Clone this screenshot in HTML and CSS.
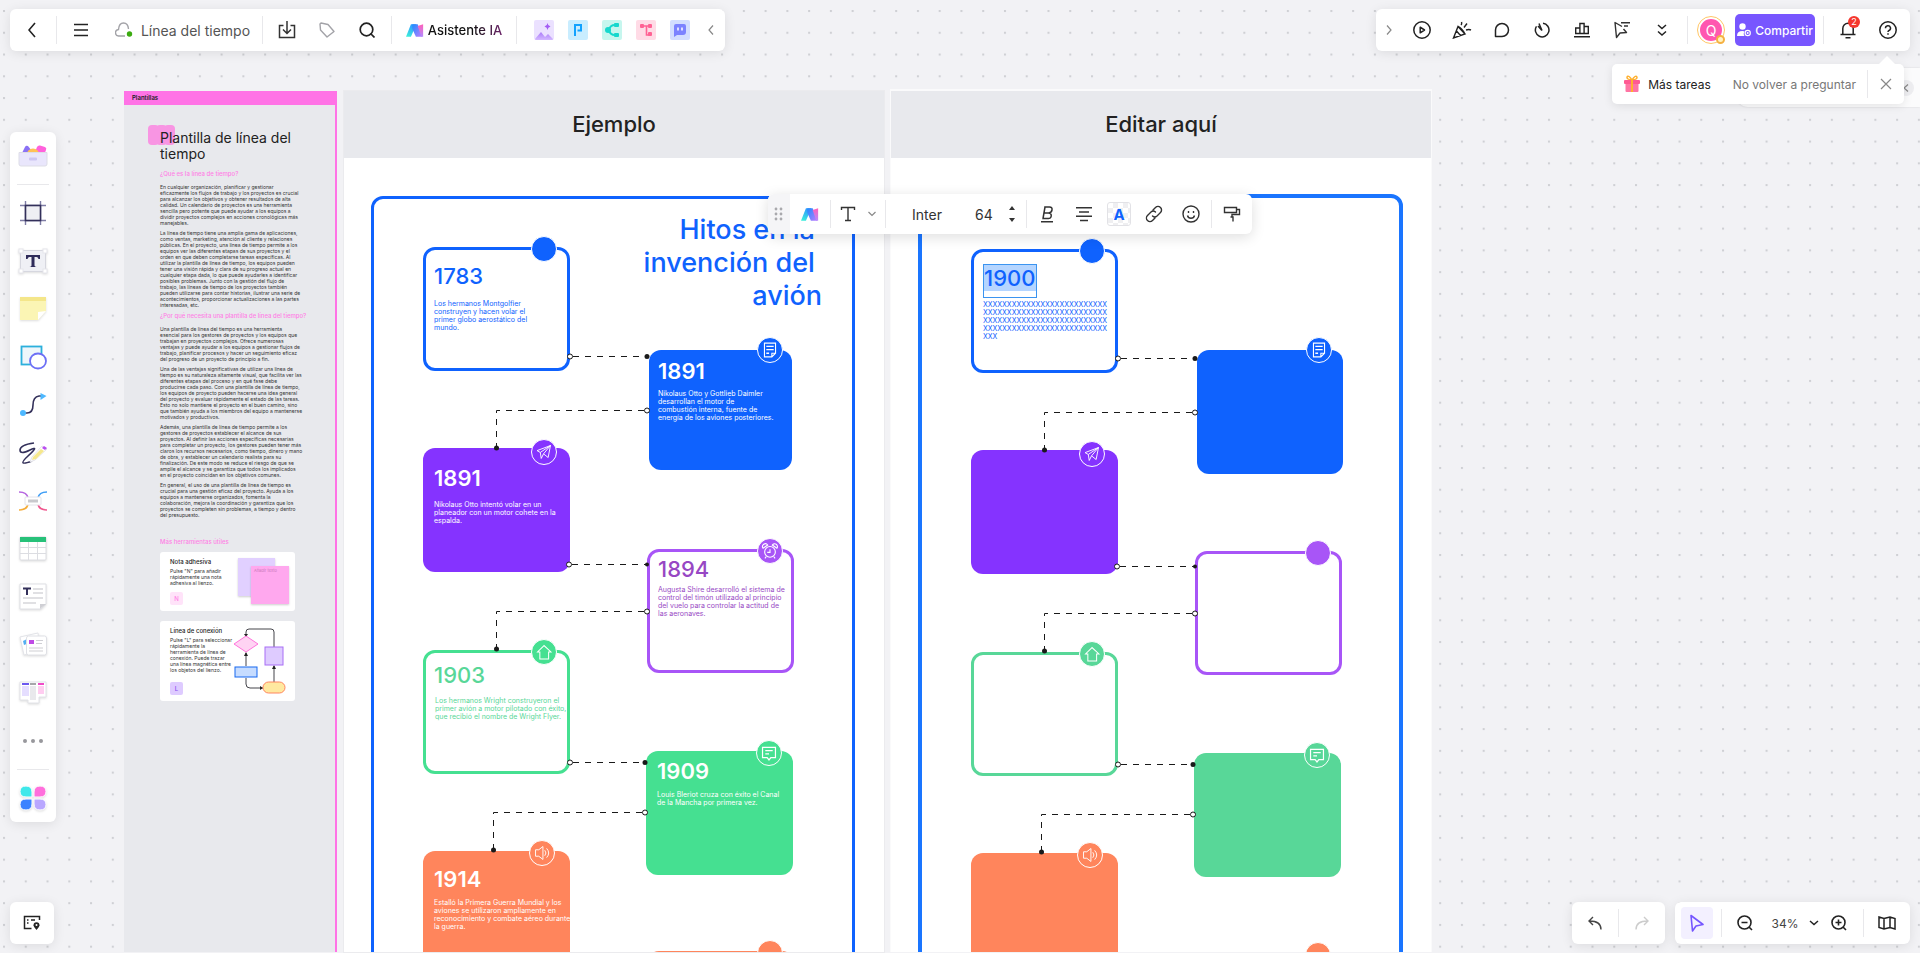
FILE: index.html
```html
<!DOCTYPE html>
<html lang="es">
<head>
<meta charset="utf-8">
<title>Línea del tiempo</title>
<link rel="stylesheet" href="styles.css">
</head>
<body>
<svg class="defs" aria-hidden="true">
  <defs>
    <linearGradient id="gA" x1="0" y1="1" x2="0.4" y2="0"><stop offset="0" stop-color="#3df5d8"/><stop offset="1" stop-color="#2f9bff"/></linearGradient>
    <linearGradient id="gB" x1="0" y1="0" x2="1" y2="1"><stop offset="0" stop-color="#1b8cff"/><stop offset="1" stop-color="#c07bff"/></linearGradient>
    <linearGradient id="gC" x1="0" y1="1" x2="0" y2="0"><stop offset="0" stop-color="#b48cff"/><stop offset="1" stop-color="#ff5fb8"/></linearGradient>
    <linearGradient id="gMount" x1="0" y1="0" x2="0" y2="1"><stop offset="0" stop-color="#ab7bfa"/><stop offset="1" stop-color="#d3b8ff"/></linearGradient>
    <symbol id="ai" viewBox="0 0 20 16">
      <path d="M5.500 1h6L5.500 15H0z" fill="url(#gA)"/>
      <path d="M7 1h6l5 14h-7L7 6z" fill="url(#gB)"/>
      <path d="M13 3l6-2v14h-2z" fill="url(#gC)"/>
    </symbol>
    <symbol id="plane" viewBox="0 0 26 26"><path d="M20 6L5.500 11.500l3.500 2L20 6l-2.500 13-5-4M9 13.500l1 6.500 2.500-5M20 6l-7.500 9" fill="none" stroke="#fff" stroke-linejoin="round"/></symbol>
    <symbol id="note" viewBox="0 0 26 26"><path d="M7 5.500h12v11l-4 4H7zM19 16.500h-4v4" fill="none" stroke="#fff" stroke-width="1.200"/><path d="M9 9h8M9 12.500h8M9 16.500h3" stroke="#fff" stroke-width="1.400"/></symbol>
    <symbol id="clock" viewBox="0 0 26 26"><circle cx="13" cy="14" r="5.800" fill="none" stroke="#fff" stroke-width="1.200"/><path d="M13 11v3.500h-3M5.500 10a3 3 0 0 1 5-3.500zM20.500 10a3 3 0 0 0-5-3.500zM9 19l-1.500 2M17 19l1.500 2" fill="none" stroke="#fff" stroke-width="1.200"/></symbol>
    <symbol id="house" viewBox="0 0 26 26"><path d="M13 6l-7 7h2.500v7.500h9.500V13h2.500z" fill="none" stroke="#fff" stroke-width="1.100"/></symbol>
    <symbol id="speech" viewBox="0 0 26 26"><path d="M6 7h14v11h-5l-2 2.500-2-2.500H6z" fill="none" stroke="#fff" stroke-width="1.300"/><path d="M9 10.500h8M9 14h4" stroke="#fff" stroke-width="1.300"/></symbol>
    <symbol id="sound" viewBox="0 0 26 26"><path d="M6 9.500h3.500L14 6v14l-4.500-3.500H6zM16 10q2.500 3 0 6M18 8q4.500 5 0 10" fill="none" stroke="#fff" stroke-linejoin="round"/></symbol>
    <symbol id="links" viewBox="0 0 540 862">
      <g fill="none" stroke="#1a1a1a" stroke-dasharray="6 6">
        <path d="M229 265.500h74"/><path d="M300 319.500H152.500V357"/><path d="M228 473.500h74"/><path d="M300 520.500H152.500V558"/><path d="M229 671.500h72"/><path d="M298 721.500H149.500V759"/>
      </g>
      <g fill="#fff" stroke="#1a1a1a"><circle cx="226" cy="265.500" r="2.500"/><circle cx="303" cy="319.500" r="2.500"/><circle cx="225" cy="473.500" r="2.500"/><circle cx="303" cy="520.500" r="2.500"/><circle cx="226" cy="671.500" r="2.500"/><circle cx="301" cy="721.500" r="2.500"/></g>
      <g fill="#1a1a1a"><circle cx="303" cy="265.500" r="2.500"/><circle cx="152.500" cy="357" r="2.500"/><circle cx="303" cy="473.500" r="2"/><circle cx="152.500" cy="558" r="2.500"/><circle cx="301" cy="671.500" r="2.500"/><circle cx="149.500" cy="759" r="2.500"/></g>
    </symbol>
    <pattern id="dots" width="64" height="64" patternUnits="userSpaceOnUse" patternTransform="translate(3 10) scale(.34)"><rect width="6" height="6" fill="#cfd0d4"/></pattern>
  </defs>
</svg>

<main class="board">
  <svg class="grid" aria-hidden="true"><rect width="100%" height="100%" fill="url(#dots)"/></svg>

  <section class="guide">
    <div class="guide-tab">Plantillas</div>
    <div class="guide-body">
      <span class="marks"><i></i><i></i><i></i></span>
      <h1>Plantilla de línea del<br>tiempo</h1>
      <h2>¿Qué es la línea de tiempo?</h2>
      <p>En cualquier organización, planificar y gestionar<br>eficazmente los flujos de trabajo y los proyectos es crucial<br>para alcanzar los objetivos y obtener resultados de alta<br>calidad. Un calendario de proyectos es una herramienta<br>sencilla pero potente que puede ayudar a los equipos a<br>dividir proyectos complejos en acciones cronológicas más<br>manejables.</p>
      <p>La línea de tiempo tiene una amplia gama de aplicaciones,<br>como ventas, marketing, atención al cliente y relaciones<br>públicas. En el proyecto, una línea de tiempo permite a los<br>equipos ver las diferentes etapas de sus proyectos y el<br>orden en que deben completarse tareas específicas. Al<br>utilizar la plantilla de línea de tiempo, los equipos pueden<br>tener una visión rápida y clara de su progreso actual en<br>cualquier etapa dada, lo que puede ayudarles a identificar<br>posibles problemas. Junto con la gestión del flujo de<br>trabajo, las líneas de tiempo de los proyectos también<br>pueden utilizarse para contar historias, ilustrar una serie de<br>acontecimientos, proporcionar actualizaciones a las partes<br>interesadas, etc.</p>
      <h2 class="second">¿Por qué necesita una plantilla de línea del tiempo?</h2>
      <p>Una plantilla de línea del tiempo es una herramienta<br>esencial para los gestores de proyectos y los equipos que<br>trabajan en proyectos complejos. Ofrece numerosas<br>ventajas y puede ayudar a los equipos a gestionar flujos de<br>trabajo, planificar procesos y hacer un seguimiento eficaz<br>del progreso de un proyecto de principio a fin.</p>
      <p>Una de las ventajas significativas de utilizar una línea de<br>tiempo es su naturaleza altamente visual, que facilita ver las<br>diferentes etapas del proceso y en qué fase debe<br>producirse cada paso. Con una plantilla de línea de tiempo,<br>los equipos de proyecto pueden hacerse una idea general<br>del proyecto y evaluar rápidamente el estado de las tareas.<br>Esto no solo mantiene el proyecto en el buen camino, sino<br>que también ayuda a los miembros del equipo a mantenerse<br>motivados y productivos.</p>
      <p>Además, una plantilla de línea de tiempo permite a los<br>gestores de proyectos establecer el alcance de sus<br>proyectos. Al definir las acciones específicas necesarias<br>para completar un proyecto, los gestores pueden tener más<br>claros los recursos necesarios, como tiempo, dinero y mano<br>de obra, y establecer un calendario realista para su<br>finalización. De este modo se reduce el riesgo de que se<br>amplíe el alcance y se garantiza que todos los implicados<br>en el proyecto coincidan en los objetivos comunes.</p>
      <p>En general, el uso de una plantilla de línea de tiempo es<br>crucial para una gestión eficaz del proyecto. Ayuda a los<br>equipos a mantenerse organizados, fomenta la<br>colaboración, mejora la coordinación y garantiza que los<br>proyectos se completen sin problemas, a tiempo y dentro<br>del presupuesto.</p>
      <h2 class="tools-title">Más herramientas útiles</h2>
      <article class="tip">
        <div class="tip-text">
          <h3>Nota adhesiva</h3>
          <p>Pulse "N" para añadir<br>rápidamente una nota<br>adhesiva al lienzo.</p>
          <kbd class="key-pink">N</kbd>
        </div>
        <div class="stickies"><span class="lilac"></span><span class="rose">Añadir texto</span></div>
      </article>
      <article class="tip tall">
        <div class="tip-text">
          <h3>Línea de conexión</h3>
          <p>Pulse "L" para seleccionar<br>rápidamente la<br>herramienta de línea de<br>conexión. Puede trazar<br>una línea magnética entre<br>los objetos del lienzo.</p>
          <kbd>L</kbd>
        </div>
        <svg class="flow" width="54" height="68" viewBox="0 0 54 68" fill="none">
          <path d="M13 10V5q0-3 3-3h22q3 0 3 3v16M13 39V26M41 56V39M13 51v6q0 4 4 4h13" stroke="#45454b"/>
          <path d="M13 10l-2-3h4zM13 25l-2 4h4zM41 38l-2 4h4zM30 61l-3-2v4z" fill="#222"/>
          <path d="M13 9l12 8-12 8-12-8z" fill="#ffd3f3" stroke="#ff73dc"/>
          <rect x="32" y="20" width="18" height="18" fill="#decbff" stroke="#a86ff5"/>
          <rect x="2" y="40" width="22" height="10" fill="#c6dcff" stroke="#1668f0"/>
          <rect x="30" y="55" width="22" height="11" rx="5.500" fill="#ffe9a0" stroke="#ff8560"/>
        </svg>
      </article>
    </div>
  </section>

  <section class="frame">
    <h2 class="frame-title">Ejemplo</h2>
    <div class="outline"></div>
    <div class="diagram">
      <p class="headline">Hitos en la 
invención del 
avión</p>
      <article class="card left c1 line blue"><h3>1783</h3><p>Los hermanos Montgolfier<br>construyen y hacen volar el<br>primer globo aerostático del<br>mundo.</p><span class="badge"></span></article>
      <article class="card right c2 fill blue"><h3>1891</h3><p>Nikolaus Otto y Gottlieb Daimler<br>desarrollan el motor de<br>combustión interna, fuente de<br>energía de los aviones posteriores.</p><span class="badge"><svg><use href="#note"/></svg></span></article>
      <article class="card left c3 fill purple"><h3>1891</h3><p>Nikolaus Otto intentó volar en un<br>planeador con un motor cohete en la<br>espalda.</p><span class="badge"><svg><use href="#plane"/></svg></span></article>
      <article class="card right c4 line violet"><h3>1894</h3><p>Augusta Shire desarrolló el sistema de<br>control del timón utilizado al principio<br>del vuelo para controlar la actitud de<br>las aeronaves.</p><span class="badge"><svg><use href="#clock"/></svg></span></article>
      <article class="card left c5 line green"><h3>1903</h3><p>Los hermanos Wright construyeron el<br>primer avión a motor pilotado con éxito,<br>que recibió el nombre de Wright Flyer.</p><span class="badge"><svg><use href="#house"/></svg></span></article>
      <article class="card right c6 fill green"><h3>1909</h3><p>Louis Bleriot cruza con éxito el Canal<br>de la Mancha por primera vez.</p><span class="badge"><svg><use href="#speech"/></svg></span></article>
      <article class="card left c7 fill orange"><h3>1914</h3><p>Estalló la Primera Guerra Mundial y los<br>aviones se utilizaron ampliamente en<br>reconocimiento y combate aéreo durante<br>la guerra.</p><span class="badge"><svg><use href="#sound"/></svg></span></article>
      <article class="card right c8 line orange"><span class="badge"></span></article>
      <svg class="links" width="540" height="862"><use href="#links"/></svg>
    </div>
  </section>

  <section class="frame edit">
    <h2 class="frame-title">Editar aquí</h2>
    <div class="outline"></div>
    <div class="diagram">
      <article class="card left c1 line blue"><h3 class="selected"><span>1900</span></h3><p>XXXXXXXXXXXXXXXXXXXXXXXXXX<br>XXXXXXXXXXXXXXXXXXXXXXXXXX<br>XXXXXXXXXXXXXXXXXXXXXXXXXX<br>XXXXXXXXXXXXXXXXXXXXXXXXXX<br>XXX</p><span class="badge"></span></article>
      <article class="card right c2 fill blue"><span class="badge"><svg><use href="#note"/></svg></span></article>
      <article class="card left c3 fill purple"><span class="badge"><svg><use href="#plane"/></svg></span></article>
      <article class="card right c4 line violet"><span class="badge"></span></article>
      <article class="card left c5 line mint"><span class="badge"><svg><use href="#house"/></svg></span></article>
      <article class="card right c6 fill mint"><span class="badge"><svg><use href="#speech"/></svg></span></article>
      <article class="card left c7 fill orange"><span class="badge"><svg><use href="#sound"/></svg></span></article>
      <article class="card right c8"><span class="badge orange"></span></article>
      <svg class="links" width="540" height="862"><use href="#links"/></svg>
    </div>
  </section>

  <div class="format-bar" role="toolbar" aria-label="Formato de texto">
    <span class="grip"><svg width="10" height="14" viewBox="0 0 10 14" fill="#a9a9ad"><circle cx="2" cy="2" r="1.400"/><circle cx="7" cy="2" r="1.400"/><circle cx="2" cy="7" r="1.400"/><circle cx="7" cy="7" r="1.400"/><circle cx="2" cy="12" r="1.400"/><circle cx="7" cy="12" r="1.400"/></svg></span>
    <button class="w40" aria-label="Asistente IA"><svg width="18" height="15"><use href="#ai"/></svg></button><i class="sep"></i>
    <button class="type" aria-label="Tipo de texto"><svg width="16" height="16" viewBox="0 0 16 16" fill="none" stroke="#333" stroke-width="1.400"><path d="M1.500 4V1.500h13V4M8 1.500v13M5 14.500h6"/></svg><svg width="8" height="6" viewBox="0 0 8 6" fill="none" stroke="#888" stroke-width="1.200"><path d="M0.500 1L4 4.500 7.500 1"/></svg></button><i class="sep"></i>
    <select class="font-name" aria-label="Fuente"><option>Inter</option></select>
    <input class="font-size" aria-label="Tamaño" value="64">
    <button class="step" aria-label="Cambiar tamaño"><svg width="8" height="18" viewBox="0 0 8 18" fill="#333"><path d="M4 1l3 4H1zM4 17l3-4H1z"/></svg></button><i class="sep"></i>
    <button class="w40" aria-label="Negrita"><svg width="16" height="18" viewBox="0 0 16 18" fill="none" stroke="#333" stroke-width="1.500"><path d="M6 2h4.500q3 .2 2.500 3t-3.500 3H5h4.500q3.200.3 2.700 3.200T8.500 13.500H4zM6 2L4 13.500M2 16.800h12"/></svg></button>
    <button class="w34" aria-label="Alinear"><svg width="18" height="16" viewBox="0 0 18 16" stroke="#333" stroke-width="1.400"><path d="M1 1.700h16M4 6h10M1 10.300h16M5 14.500h8"/></svg></button>
    <button class="color" aria-label="Color del texto"><b>A</b></button>
    <button class="w34" aria-label="Enlace"><svg width="18" height="18" viewBox="0 0 18 18" fill="none" stroke="#333" stroke-width="1.400" stroke-linecap="round"><path d="M8 5l2.500-2.500a3.300 3.300 0 0 1 5 5L12 11a3.300 3.300 0 0 1-4.500 0M10 13l-2.500 2.500a3.300 3.300 0 0 1-5-5L6 7a3.300 3.300 0 0 1 4.500 0"/></svg></button>
    <button class="w40" aria-label="Emoji"><svg width="18" height="18" viewBox="0 0 18 18" fill="none" stroke="#333" stroke-width="1.400"><circle cx="9" cy="9" r="8"/><path d="M5.500 10.500a3.600 3.600 0 0 0 7 0M6.500 6v2M11.500 6v2"/></svg></button><i class="sep"></i>
    <button class="w40" aria-label="Copiar formato"><svg width="18" height="16" viewBox="0 0 18 16" fill="none" stroke="#333" stroke-width="1.400"><path d="M1.500 1.500h12v5h-12zM13.500 3.500h3v5H9v2.500M7.500 11H10v4.500"/></svg></button>
  </div>
</main>

<div class="app">
  <header>
    <nav class="bar">
      <button class="w46" aria-label="Volver"><svg width="10" height="16" viewBox="0 0 10 16" fill="none" stroke="#222" stroke-width="1.600"><path d="M7 1L1 8l6 7"/></svg></button><i class="sep"></i>
      <button class="w48" aria-label="Menú"><svg width="16" height="14" viewBox="0 0 16 14" stroke="#222" stroke-width="1.500"><path d="M1 1.500h14M1 7h14M1 12.500h14"/></svg></button>
      <button class="doc"><svg width="18" height="16" viewBox="0 0 18 16" fill="none" stroke="#a3a3a8" stroke-width="1.400"><path d="M10 14H4a3 3 0 0 1-.5-6.500Q4 1 8.500 1 13 1 13.500 7"/><circle cx="14.500" cy="12" r="2.700" fill="#3bab10" stroke="none"/></svg>Línea del tiempo</button><i class="sep"></i>
      <span class="group">
        <button class="w40" aria-label="Exportar"><svg width="18" height="18" viewBox="0 0 18 18" fill="none" stroke="#333" stroke-width="1.500"><path d="M5.500 4.500h-4v12h15v-12h-4M9 0v12M5 8.500L9 12.500l4-4"/></svg></button>
        <button class="w40" aria-label="Etiqueta"><svg width="16" height="16" viewBox="0 0 16 16" fill="none" stroke="#a3a3a8" stroke-width="1.400"><path d="M1 2l.5 6 6.500 7 7-5.500-6-7L2 1z" stroke-linejoin="round"/></svg></button>
        <button class="w40" aria-label="Buscar"><svg width="16" height="16" viewBox="0 0 16 16" fill="none" stroke="#222" stroke-width="1.700"><circle cx="7.500" cy="7.500" r="6.300"/><path d="M11.500 11.500l4 4"/></svg></button>
      </span><i class="sep"></i>
      <button class="assistant"><svg width="18" height="15"><use href="#ai"/></svg><span>Asistente IA</span></button><i class="sep"></i>
      <span class="apps">
        <button class="w34" aria-label="Imagen"><svg width="20" height="20" viewBox="0 0 20 20"><rect width="20" height="20" rx="2" fill="#ebe1ff"/><path d="M1 19l6-7 4 5 3-3 5 5q0 1-1 1H2q-1 0-1-1z" fill="url(#gMount)"/><path d="M13.500 3q.3 3 3 3.500-2.700.5-3 3.500-.3-3-3-3.500 2.700-.5 3-3.500z" fill="#a45cf5"/></svg></button>
        <button class="w34" aria-label="Presentación"><svg width="20" height="20" viewBox="0 0 20 20"><rect width="20" height="20" rx="2" fill="#c9edff"/><path d="M7 16V5h6v5.500H9.500M7 16" fill="none" stroke="#12a2ff" stroke-width="2"/></svg></button>
        <button class="w34" aria-label="Mapa mental"><svg width="20" height="20" viewBox="0 0 20 20"><rect width="20" height="20" rx="2" fill="#c6f6ee"/><path d="M13 5q-5 0-6 5 1 5 6 5M4 10h4" fill="none" stroke="#16d8cd" stroke-width="2"/><rect x="12" y="3" width="5" height="4" rx="1" fill="#16d8cd"/><rect x="12" y="13" width="5" height="4" rx="1" fill="#16d8cd"/><circle cx="6" cy="10" r="3" fill="#16d8cd"/></svg></button>
        <button class="w34" aria-label="Diagrama"><svg width="20" height="20" viewBox="0 0 20 20"><rect width="20" height="20" rx="2" fill="#ffdbe6"/><path d="M5 6h10M10.500 6v9H14" fill="none" stroke="#ff6294" stroke-width="1.600"/><rect x="4" y="4" width="4" height="4" rx="1" fill="#ff6294"/><rect x="12" y="4" width="4" height="4" rx="1" fill="#ff6294"/><rect x="12" y="12" width="4" height="4" rx="1" fill="#ff6294"/></svg></button>
        <button class="w34" aria-label="Chat IA"><svg width="20" height="20" viewBox="0 0 20 20"><rect width="20" height="20" rx="2" fill="#d3deff"/><path d="M6 4h8q2 0 2 2v6q0 3-3 3H7l-3 2V6q0-2 2-2z" fill="#7c83ff"/><path d="M8 7.500v3M12 7.500v3" stroke="#fff" stroke-width="1.500"/></svg></button>
      </span>
      <button class="fold" aria-label="Contraer"><svg width="6" height="10" viewBox="0 0 6 10" fill="none" stroke="#888" stroke-width="1.200"><path d="M5 .5L1 5l4 4.500"/></svg></button>
    </nav>

    <nav class="bar">
      <button class="fold narrow" aria-label="Expandir"><svg width="6" height="10" viewBox="0 0 6 10" fill="none" stroke="#888" stroke-width="1.200"><path d="M1 .5L5 5 1 9.500"/></svg></button>
      <span class="tools">
        <button class="w40" aria-label="Presentar"><svg width="18" height="18" viewBox="0 0 18 18" fill="none" stroke="#222" stroke-width="1.500"><circle cx="9" cy="9" r="8.200"/><path d="M7.200 6.200L11.500 9l-4.300 2.800z" stroke-linejoin="round"/></svg></button>
        <button class="w40" aria-label="Celebrar"><svg width="20" height="18" viewBox="0 0 20 18" fill="none" stroke="#222" stroke-width="1.400"><path d="M6 5.500L1.500 17l11.500-4zM6 5.500q4 2 7 7.500M4.500 10l4 4.500M9 4q1-1 .5-3M12 6.500l3-4M14 9q3-1 5 0"/></svg></button>
        <button class="w40" aria-label="Comentarios"><svg width="16" height="16" viewBox="0 0 16 16" fill="none" stroke="#222" stroke-width="1.500"><path d="M1.500 14.500V8A6.500 6.500 0 1 1 8 14.500z" stroke-linejoin="round"/></svg></button>
        <button class="w40" aria-label="Temporizador"><svg width="16" height="16" viewBox="0 0 16 16" fill="none" stroke="#222" stroke-width="1.500"><path d="M9 1.300a6.800 6.800 0 1 1-6.500 3M8 8.500L5 1.500M8 8.500L4 4"/></svg></button>
        <button class="w40" aria-label="Votación"><svg width="16" height="16" viewBox="0 0 16 16" fill="none" stroke="#222" stroke-width="1.400"><path d="M0 14.800h16M1.700 11.500V6h4.200v5.500zM5.900 11.500V1.500h4.200v10zM10.100 11.500V4.500h4.200v7z"/></svg></button>
        <button class="w40" aria-label="Seguir cursor"><svg width="18" height="18" viewBox="0 0 18 18" fill="none" stroke="#333" stroke-width="1.400" stroke-linejoin="round"><path d="M9 5.500L2 1.500 3.500 16.500 7 12l6.500-.5-3-3.500M8 1.700h9M11 5h4"/></svg></button>
        <button class="w40" aria-label="Más"><svg width="10" height="14" viewBox="0 0 10 14" fill="none" stroke="#222" stroke-width="1.500"><path d="M1 2l4 3.500L9 2M1 8.500L5 12l4-3.500"/></svg></button>
      </span><i class="sep"></i>
      <button class="avatar" aria-label="Cuenta">Q<i></i></button>
      <button class="share"><svg width="14" height="14" viewBox="0 0 14 14" fill="#fff"><circle cx="5.500" cy="3.500" r="3.200"/><path d="M0 13q0-5 5.500-5 1.500 0 2 .5-1.500 2 0 4.500z"/><circle cx="10.700" cy="10" r="2.600" fill="none" stroke="#fff" stroke-width="1.200"/><circle cx="10.700" cy="10" r="1"/></svg>Compartir</button><i class="sep"></i>
      <button class="w48 bell" aria-label="Notificaciones"><svg width="16" height="18" viewBox="0 0 16 18" fill="none" stroke="#222" stroke-width="1.500"><path d="M0.500 13.500h15M2.800 13.500V7.500a5.200 5.200 0 0 1 10.400 0v6M5.500 16.700h5"/></svg><span class="count">2</span></button>
      <button class="w32" aria-label="Ayuda"><svg width="18" height="18" viewBox="0 0 18 18" fill="none" stroke="#222" stroke-width="1.500"><circle cx="9" cy="9" r="8.200"/><path d="M6.500 7.300a2.500 2.500 0 1 1 3.500 2.200q-1 .5-1 1.500M9 12.200v1.500"/></svg></button>
    </nav>

    <div class="drawer"><button aria-label="Contraer panel"><svg width="6" height="8" viewBox="0 0 6 8" fill="none" stroke="#888" stroke-width="1.200"><path d="M5 .5L1 4l4 3.500"/></svg></button></div>
    <div class="notice">
      <svg width="16" height="18" viewBox="0 0 16 18"><path d="M8 5Q2.500 4.500 3 2q1.500-2.500 5 3 3.500-5.500 5-3 .5 2.500-5 3z" fill="none" stroke="#ffb02e" stroke-width="1.400"/><rect x="1.500" y="8" width="13" height="9" rx="1" fill="#ff74a4"/><rect y="5" width="16" height="4" rx="1" fill="#ff5a93"/><path d="M8 5v12" stroke="#ffb02e" stroke-width="2"/></svg>
      <a class="more" href="#">Más tareas</a>
      <a class="never" href="#">No volver a preguntar</a><i class="sep"></i>
      <button aria-label="Cerrar"><svg width="12" height="12" viewBox="0 0 12 12" stroke="#888" stroke-width="1.200"><path d="M1 1l10 10M11 1L1 11"/></svg></button>
    </div>
  </header>

  <aside class="side">
    <button aria-label="Plantillas"><svg width="30" height="24" viewBox="0 0 30 24"><path d="M3 11L7 3q1-2 3-1l7 9z" fill="#8a71f5"/><path d="M17 8l2-5q1-2 3-1.500l5 1.500q2 1 1 3l-2 5z" fill="#ff62dc"/><circle cx="15" cy="11" r="6.500" fill="#ffc155"/><path d="M1 8.500h28V20q0 2-2 2H3q-2 0-2-2z" fill="#e9e6fc" stroke="#dddde6"/><rect x="11" y="13.500" width="8" height="3" rx="1" fill="#cdc6f2"/></svg></button>
    <i class="rule"></i>
    <button aria-label="Marco"><svg width="26" height="26" viewBox="0 0 26 26" fill="none"><path d="M5.500 1v24M20.500 1v24M0 5.500h26M0 20.500h26" stroke="#7f7da5" stroke-width="1.400"/><rect x="5.500" y="5.500" width="15" height="15" fill="#efeff4" stroke="#33305a" stroke-width="1.600"/></svg></button>
    <button aria-label="Texto"><svg class="lift" width="30" height="30" viewBox="0 0 30 30"><rect x="2.500" y="4.500" width="25" height="21" fill="#eff0f5" stroke="#d6d7df"/><g fill="#fff" stroke="#e6e6ec"><rect x="1" y="3" width="4" height="4"/><rect x="25" y="3" width="4" height="4"/><rect x="1" y="23" width="4" height="4"/><rect x="25" y="23" width="4" height="4"/></g><path d="M8 9h14v4h-1.500q-.5-2-2-2h-2v8.500q0 1 2 1.500h-7q2-.5 2-1.500V11h-2q-1.500 0-2 2H8z" fill="#2f2c5a"/></svg></button>
    <button aria-label="Nota adhesiva"><svg class="lift" width="30" height="28" viewBox="0 0 30 28"><path d="M2 2h26v14l-8 9H2z" fill="#fbf5b4"/><path d="M2 2h26v4H2z" fill="#f4e68a"/><path d="M28 16l-8 9v-8z" fill="#fff"/></svg></button>
    <button aria-label="Formas"><svg width="28" height="26" viewBox="0 0 28 26" stroke-width="1.800"><rect x="2.500" y="2.500" width="20" height="18" fill="#eef6fa" stroke="#2cb0dc"/><ellipse cx="19" cy="17" rx="8" ry="7.500" fill="#fff" stroke="#6c6ff5"/></svg></button>
    <button aria-label="Conector"><svg width="28" height="26" viewBox="0 0 28 26"><path d="M4 21h4q6 0 6-8t6-9h3" fill="none" stroke="#33305a" stroke-width="1.600"/><circle cx="4" cy="21" r="3" fill="#4db8ff"/><path d="M21.500 1l6 3-6 4z" fill="#4db8ff"/></svg></button>
    <button aria-label="Lápiz"><svg width="30" height="24" viewBox="0 0 30 24"><path d="M16 2Q2 4 2 9t10 0-2 6 4 5" fill="none" stroke="#33305a" stroke-width="1.600"/><path d="M12 21l2-5L24 5l5 3-12 11z" fill="#fff" stroke="#e4e4ea"/><path d="M14 19l1-3 8-8 3 2-8 8z" fill="#f6e88c"/><path d="M24 7l2-2 3 2-2 2z" fill="#b94df0"/></svg></button>
    <button aria-label="Mapa mental"><svg width="28" height="24" viewBox="0 0 28 24" fill="none" stroke-width="1.600"><path d="M0 3q8 0 9 6" stroke="#b565e0"/><path d="M28 3q-8 0-9 6" stroke="#3e9df5"/><path d="M0 21q8 0 9-6" stroke="#f5ac38"/><path d="M28 21q-8 0-9-6" stroke="#f0568e"/><rect x="6" y="8" width="16" height="8" rx="1" fill="#fff" stroke="#e4e4ea" stroke-width="1"/><path d="M9 12h10" stroke="#c9c9cd" stroke-width="3"/></svg></button>
    <button aria-label="Tabla"><svg class="lift" width="28" height="26" viewBox="0 0 28 26"><rect x="1" y="1" width="26" height="23" rx="1" fill="#fff" stroke="#dcdde2"/><path d="M1 1h26v5H1z" fill="#27c179"/><path d="M1 11.500h26M1 17.500h26M9.500 6v18M18.500 6v18" stroke="#dcdde2"/></svg></button>
    <button aria-label="Documento"><svg class="lift" width="28" height="28" viewBox="0 0 28 28"><path d="M1 1h26v20l-5 5H1z" fill="#fff" stroke="#dfe0e5"/><path d="M27 21h-6v5z" fill="#cfcfd4"/><path d="M4 5.500h8M8 5v7" stroke="#33305a" stroke-width="2"/><path d="M14 6h10M14 10h10M4 15h20M4 20h13" stroke="#d6d6da" stroke-width="1.400"/></svg></button>
    <button aria-label="Tarjetas"><svg class="lift" width="30" height="28" viewBox="0 0 30 28"><path d="M2 6l18-4 2 18-16 4z" fill="#fff" stroke="#e2e3e8"/><path d="M5 10l4-2 2 4-5 2z" fill="#53aef2"/><rect x="8.500" y="5" width="20" height="19" rx="2" fill="#fff" stroke="#dfe0e5"/><rect x="11" y="9" width="5" height="4" fill="#bf4be5"/><path d="M18 9.500h7M18 12.500h6M11 17h14M11 20h14" stroke="#cfcfd4" stroke-width="1.200"/></svg></button>
    <button aria-label="Kanban"><svg class="lift" width="28" height="28" viewBox="0 0 28 28"><path d="M1 3h26v15h-7v6H9v-3H1z" fill="#fff" stroke="#e2e3e8"/><path d="M3 4h7v2H3z" fill="#6b58f0"/><path d="M11 4h6v2h-6z" fill="#a6a6aa"/><path d="M19 4h6v2h-6z" fill="#f04bc8"/><path d="M3 7h7v10H3z" fill="#e5deff"/><path d="M11 7h6v14h-6z" fill="#e9e9ec"/><path d="M19 7h6v8h-6z" fill="#ffcdf0"/></svg></button>
    <button aria-label="Más herramientas"><svg width="22" height="4" viewBox="0 0 22 4" fill="#98989c"><circle cx="3" cy="2" r="2"/><circle cx="11" cy="2" r="2"/><circle cx="19" cy="2" r="2"/></svg></button>
    <i class="rule"></i>
    <button aria-label="Aplicaciones"><svg class="lift" width="28" height="28" viewBox="0 0 28 28" stroke="#fff"><path d="M1 7.500q0-5.500 6-5.500t6 6v5H7q-6 0-6-5.500z" fill="#3fe8ea"/><path d="M27 7.500q0-5.500-6-5.500t-6 6v5h6q6 0 6-5.500z" fill="#ff6fdc"/><path d="M1 20.500Q1 26 7 26t6-6v-5H7q-6 0-6 5.500z" fill="#3b82ff"/><path d="M27 20.500q0 5.500-6 5.500t-6-6v-5h6q6 0 6 5.500z" fill="#b9a7ff"/></svg></button>
  </aside>

  <footer>
    <div class="bar"><button class="w44" aria-label="Página"><svg width="18" height="16" viewBox="0 0 18 16" fill="none" stroke="#222" stroke-width="1.500"><path d="M16.500 5V1.500h-15v12h7M4 5h1.500M4 8h1.500M8 5h4"/><path d="M13.500 15q-3-3-3-4.800a3 3 0 0 1 6 0q0 1.800-3 4.800z" fill="#222" stroke="none"/><circle cx="13.500" cy="10" r="1" fill="#fff" stroke="none"/></svg></button></div>
    <div class="corner">
      <div class="bar">
        <button class="w46" aria-label="Deshacer"><svg width="14" height="14" viewBox="0 0 14 14" fill="none" stroke="#444" stroke-width="1.400"><path d="M13 13.500Q13 5 1.500 5M5 1L1 5l4 4"/></svg></button><i class="sep"></i>
        <button class="w46" aria-label="Rehacer"><svg width="14" height="14" viewBox="0 0 14 14" fill="none" stroke="#ccc" stroke-width="1.400"><path d="M1 13.500Q1 5 12.500 5M9 1l4 4-4 4"/></svg></button>
      </div>
      <div class="bar zoom">
        <button class="pointer" aria-label="Seleccionar"><svg width="16" height="18" viewBox="0 0 16 18" fill="none" stroke="#7455ff" stroke-width="1.600" stroke-linejoin="round"><path d="M2 1.500l12 9-7 1.500-3.500 5z"/></svg></button><i class="sep"></i>
        <button class="w46" aria-label="Alejar"><svg width="16" height="16" viewBox="0 0 16 16" fill="none" stroke="#222" stroke-width="1.600"><circle cx="7.500" cy="7.500" r="6.500"/><path d="M4.500 7.500h6M12 12l3 3"/></svg></button>
        <button class="level">34%<svg width="10" height="6" viewBox="0 0 10 6" fill="none" stroke="#222" stroke-width="1.500"><path d="M1 1l4 3.500L9 1"/></svg></button>
        <button class="w32" aria-label="Acercar"><svg width="16" height="16" viewBox="0 0 16 16" fill="none" stroke="#222" stroke-width="1.600"><circle cx="7.500" cy="7.500" r="6.500"/><path d="M4.500 7.500h6M7.500 4.500v6M12 12l3 3"/></svg></button><i class="sep"></i>
        <button class="w46" aria-label="Minimapa"><svg width="18" height="14" viewBox="0 0 18 14" fill="none" stroke="#222" stroke-width="1.500"><path d="M1 1l5 1.500L12 1l5 1.500v10.500l-5-1.500-6 1.500-5-1.500zM6 2.500V13M12 1v10.500"/></svg></button>
      </div>
    </div>
  </footer>
</div>
</body>
</html>
```
FILE: styles.css
```css
* { box-sizing: border-box; margin: 0; padding: 0; }
body { height: 100vh; overflow: hidden; position: relative; background: #f2f2f5; font-family: Inter, "Liberation Sans", sans-serif; color: #222; }
button, input, select { font: inherit; color: inherit; border: 0; background: none; }
button { display: flex; align-items: center; justify-content: center; align-self: stretch; }
a { color: inherit; text-decoration: none; }
svg { display: block; flex: none; }
.defs { position: absolute; width: 0; height: 0; }

.w32 { width: 32px; }
.w34 { width: 34px; }
.w40 { width: 40px; }
.w44 { width: 44px; }
.w46 { width: 46px; }
.w48 { width: 48px; }
.sep { flex: none; width: 1px; height: 28px; background: #e8e8eb; }

/* Canvas */
.board { position: absolute; inset: 0; overflow: hidden; display: flex; padding: 91px 0 1px 124px; }
.grid { position: absolute; top: 0; left: 0; width: 100%; height: 100%; }

.guide { position: relative; flex: none; width: 213px; margin-right: 7px; overflow: hidden; background: #e8e9ed; border-right: 2px solid #ff73e6; }
.guide-tab { height: 14px; padding-left: 8px; background: #ff73e6; font-size: 6px; font-weight: 600; line-height: 14px; }
.guide-body { position: relative; padding: 25px 0 0 36px; white-space: nowrap; }
.marks { position: absolute; top: 20px; left: 24px; display: flex; }
.marks i { width: 11px; height: 20px; margin-right: -3px; border-radius: 4px; background: #f895e3; }
.guide h1 { position: relative; font-size: 14px; font-weight: 400; line-height: 16px; }
.guide h2 { margin: 8px 0 6px; font-size: 6px; font-weight: 500; line-height: 8px; color: #ff80e6; }
.guide h2.second { margin-top: 4px; }
.guide h2.tools-title { margin: 20px 0 6px; }
.guide p { margin-bottom: 4px; font-size: 5px; line-height: 6px; color: #333; }
.tip { display: flex; justify-content: space-between; width: 135px; height: 59px; margin-bottom: 10px; padding: 6px; border-radius: 3px; background: #fff; }
.tip.tall { height: 80px; padding-right: 8px; }
.tip-text { display: flex; flex-direction: column; align-items: flex-start; padding-left: 4px; }
.tip h3 { margin-bottom: 2px; font-size: 6px; font-weight: 500; line-height: 8px; }
.tip kbd { width: 13px; height: 13px; margin-top: auto; border-radius: 2px; background: #decbff; color: #8a4df0; font: 500 6px/13px Inter, sans-serif; text-align: center; }
.tip .key-pink { background: #ffe3f9; color: #ff80e6; }
.tip:not(.tall) p { margin-bottom: 0; }
.stickies { display: grid; grid-template: 8px 30px 8px / 13px 24px 14px; align-self: start; }
.stickies .lilac { grid-area: 1 / 1 / 3 / 3; background: #e1d0ff; box-shadow: 0 1px 2px #0003; }
.stickies .rose { grid-area: 2 / 2 / 4 / 4; padding: 3px; background: #ffa8ee; box-shadow: 0 1px 2px #0003; font-size: 4px; line-height: 4px; color: #c978ba; }

.frame { position: relative; flex: none; width: 540px; margin-right: 7px; overflow: hidden; background: #fff; box-shadow: 0 0 0 1px #ebebee; }
.frame.edit { box-shadow: 0 -1px 0 1px #fafafb; }
.frame-title { height: 67px; background: #e8e9ed; font-size: 22px; font-weight: 500; line-height: 67px; text-align: center; }
.outline { position: absolute; top: 105px; left: 27px; right: 29px; bottom: -20px; border: 3px solid #0f62fe; border-radius: 12px; }
.edit .outline { top: 103px; right: 28px; border-color: #1a75ff; border-width: 4px; }
.diagram { position: absolute; top: 0; left: 0; width: 540px; height: 862px; }
.edit .diagram { top: 2px; left: 1px; }
.links { position: absolute; top: 0; left: 0; }
.headline { position: absolute; top: 122px; right: 62px; font-size: 27px; font-weight: 500; line-height: 33px; text-align: right; white-space: pre; color: #0f62fe; }

.card { position: absolute; width: 147px; height: 124px; padding: 0 0 0 11px; border-radius: 12px; white-space: nowrap; }
.card h3 { font-size: 22px; font-weight: 500; line-height: 26px; }
.card p { font-size: 7px; line-height: 8px; }
.left { left: 79px; }
.right { left: 303px; }
.line { padding-left: 8px; border: 3px solid var(--ink); color: var(--ink); }
.fill { background: var(--ink); color: #fff; }
.fill h3 { font-weight: 600; }
.blue { --ink: #0f62fe; }
.purple { --ink: #8533ff; }
.violet { --ink: #a855f7; }
.green { --ink: #45e091; }
.mint { --ink: #58d798; }
.orange { --ink: #ff855c; }
.violet h3, .violet p { color: #9747c4; }
.line.green h3, .line.green p { color: #58d798; }
.c1 { top: 156px; padding-top: 13px; }
.c1 p { margin-top: 11px; }
.c2 { top: 259px; left: 305px; width: 143px; height: 120px; padding: 8px 0 0 9px; }
.c2 p { margin-top: 6px; }
.c3 { top: 357px; padding-top: 17px; }
.c3 p { margin-top: 10px; }
.c4 { top: 458px; padding-top: 4px; }
.c4 p { margin-top: 4px; }
.c5 { top: 559px; padding-top: 9px; }
.c5 p { margin: 9px 0 0 1px; }
.c6 { top: 660px; left: 302px; padding-top: 7px; }
.c6 p { margin-top: 7px; }
.c7 { top: 760px; padding-top: 15px; }
.c7 p { margin-top: 7px; }
.c8 { top: 860px; }
.edit .c2 { top: 257px; width: 146px; height: 124px; }
.badge { position: absolute; top: -11px; right: 13px; width: 26px; height: 26px; border: 1px solid #fff; border-radius: 50%; background: var(--ink); }
.line .badge { top: -14px; right: 10px; }
.c2 .badge { top: -13px; right: 9px; }
.edit .c2 .badge { right: 11px; }
.c3 .badge { top: -9px; }
.c4 .badge, .c8.line .badge { right: 8px; }
.c6 .badge, .c8 .badge { right: 11px; }
.c7 .badge { right: 15px; }
.badge svg { width: 24px; height: 24px; }
.card .selected { width: 54px; height: 34px; margin: -1px 0 0 1px; border: 1px solid #3b94f0; }
.card .selected + p { margin: 3px 0 0 1px; }
.selected span { display: block; width: 52px; background: #b5d5ff; }

.format-bar { position: absolute; top: 194px; left: 768px; height: 40px; display: flex; align-items: center; border-radius: 6px; background: #fff; box-shadow: 0 3px 14px #00000022; overflow: hidden; font-size: 14px; color: #333; }
.grip { align-self: stretch; width: 22px; display: grid; place-items: center; background: #f5f5f7; }
.type { width: 54px; gap: 12px; }
.font-name { width: 70px; padding-left: 26px; appearance: none; }
.font-size { width: 42px; padding-left: 19px; }
.step { width: 28px; }
.format-bar .color { align-self: center; width: 24px; height: 24px; margin: 0 6px; border: 1px solid #e2e2e6; border-radius: 3px; background: repeating-conic-gradient(#efeff1 0 25%, #fff 0 50%) 0 0 / 10px 10px; color: #0f62fe; font-size: 15px; }

/* Floating controls */
.app { position: relative; display: flex; flex-direction: column; height: 100%; padding: 9px 10px; pointer-events: none; }
.app button, .app a { pointer-events: auto; }
header, footer { position: relative; display: flex; justify-content: space-between; }
.bar { display: flex; align-items: center; height: 42px; border-radius: 6px; background: #fff; box-shadow: 0 2px 12px #00000018; }
.group { display: flex; height: 100%; padding: 0 4px; }
.doc { width: 157px; gap: 8px; padding-right: 2px; font-size: 14px; white-space: nowrap; color: #555; }
.assistant { width: 124px; gap: 4px; font-size: 13px; font-weight: 500; white-space: nowrap; }
.assistant span { background: linear-gradient(90deg, #111 60%, #6b2468); background-clip: text; color: transparent; }
.apps { display: flex; height: 100%; padding-left: 10px; }
.fold { width: 28px; }
.fold.narrow { width: 26px; }
.tools { display: flex; height: 100%; padding-right: 5px; }
.avatar { position: relative; align-self: center; width: 26px; height: 26px; margin: 0 11px 0 10px; border: 2px solid #fff; border-radius: 50%; outline: 1px solid #ffc766; background: #ff57b0; color: #fff; font-size: 14px; }
.avatar i { position: absolute; right: -3px; bottom: -3px; width: 9px; height: 9px; border: 2px solid #f5b041; border-radius: 50%; background: #fff3c4; }
.share { align-self: center; width: 80px; height: 32px; margin-right: 8px; gap: 4px; border-radius: 5px; background: #7856ff; color: #fff; font-size: 12px; font-weight: 500; }
.bell { position: relative; }
.count { position: absolute; top: 7px; left: 24px; width: 12px; height: 12px; border-radius: 50%; background: #f5372e; color: #fff; font-size: 9px; line-height: 12px; text-align: center; }
header .bar:nth-child(2) { padding-right: 6px; }
.notice { position: absolute; top: 55px; right: 6px; display: flex; align-items: center; height: 40px; padding-left: 12px; border-radius: 5px; background: #fff; box-shadow: 0 2px 10px #00000018; font-size: 12px; white-space: nowrap; }
.notice::before { content: ""; position: absolute; top: -8px; right: 9px; border: 8px solid transparent; border-top: 0; border-bottom-color: #fff; }
.more { margin: 0 22px 0 8px; }
.never { margin-right: 11px; color: #777; }
.notice button { width: 36px; }
.drawer { position: absolute; top: 59px; right: -10px; width: 184px; height: 39px; display: flex; align-items: center; justify-content: flex-end; padding-right: 6px; border-radius: 12px 0 0 12px; background: #fbfbfc; box-shadow: 0 0 2px #0002; }
.drawer button { align-self: center; width: 16px; height: 16px; border-radius: 50%; background: #ededf0; }

.side { display: flex; flex-direction: column; width: 46px; margin: auto 0; border-radius: 6px; background: #fff; box-shadow: 0 2px 12px #00000018; }
.side button { height: 48px; }
.rule { height: 1px; margin: 4px 7px; background: #e8e8eb; }
.lift { filter: drop-shadow(0 1px 1px #0002); }

.corner { display: flex; gap: 10px; }
.zoom { padding-left: 6px; }
.pointer { align-self: center; width: 32px; height: 32px; margin-right: 8px; border-radius: 4px; background: #f3f0ff; }
.level { width: 55px; gap: 11px; font-size: 12px; color: #444; }
.zoom .w32 { margin-right: 8px; }
```
